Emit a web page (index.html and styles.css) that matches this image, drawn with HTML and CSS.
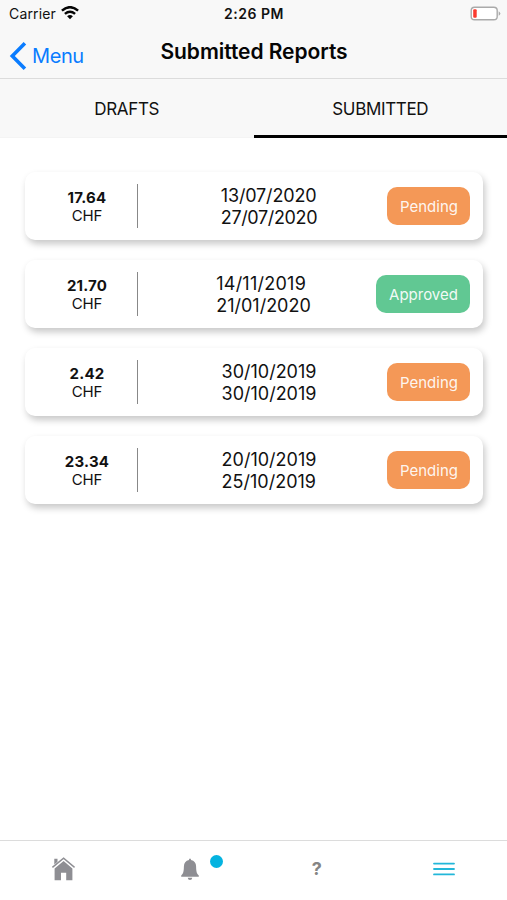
FILE: index.html
```html
<!DOCTYPE html>
<html lang="en">
<head>
<meta charset="utf-8">
<title>Submitted Reports</title>
<link rel="stylesheet" href="styles.css">
</head>
<body>
<header class="top">
  <div class="status">
    <div class="carrier"><span>Carrier</span>
      <svg width="18" height="14" viewBox="0 0 18 14" fill="none" stroke="#050505" stroke-width="2.5"><path d="M.9 4.6Q9-2.2 17.1 4.6M3.9 7.9Q9 3.7 14.1 7.9"/><path d="M6.1 10.2Q9 7.8 11.9 10.2L9 13.2Z" fill="#050505" stroke="none"/></svg>
    </div>
    <time class="clock">2:26 PM</time>
    <svg class="battery" width="31" height="16" viewBox="0 0 31 16"><rect x="1.2" y="1.2" width="26" height="12.6" rx="3.4" fill="#fff" stroke="#aaa" stroke-width="1.4"/><rect x="3.2" y="3.3" width="3.5" height="8.5" rx="1" fill="#fb3b30"/><path d="M28.7 5.2Q32 7.5 28.7 9.8Z" fill="#aaa"/></svg>
  </div>
  <div class="nav">
    <a class="back"><svg width="18" height="28" viewBox="0 0 18 28" fill="none" stroke="#0a7cff" stroke-width="3.6"><path d="M15.9 1.3 3.3 14 15.9 26.7"/></svg><span>Menu</span></a>
    <h1>Submitted Reports</h1>
  </div>
</header>
<nav class="tabs"><a class="tab">DRAFTS</a><a class="tab active">SUBMITTED</a></nav>
<main class="list">
  <article class="card"><div class="amount"><b>17.64</b><span>CHF</span></div><div class="dates tight"><div><p>13/07/2020</p><p>27/07/2020</p></div></div><span class="badge pending">Pending</span></article>
  <article class="card"><div class="amount"><b>21.70</b><span>CHF</span></div><div class="dates"><div><p class="loose">14/11/2019</p><p>21/01/2020</p></div></div><span class="badge approved">Approved</span></article>
  <article class="card"><div class="amount"><b>2.42</b><span>CHF</span></div><div class="dates"><div><p>30/10/2019</p><p>30/10/2019</p></div></div><span class="badge pending">Pending</span></article>
  <article class="card"><div class="amount"><b>23.34</b><span>CHF</span></div><div class="dates"><div><p>20/10/2019</p><p>25/10/2019</p></div></div><span class="badge pending">Pending</span></article>
</main>
<footer class="bottom">
  <a class="item"><svg width="24" height="24" viewBox="0 0 24 24"><path d="M3.3 1.8h3.2v3L3.3 7.6zM3.6 11.5 12.6 4 21.4 11.5V23.3h-6.2v-7.6H10v7.6H3.6z" fill="#8e8e93"/><path d="M1.4 10.3 12.6 1.1 23.6 10.3" fill="none" stroke="#8e8e93" stroke-width="1.5"/></svg></a>
  <a class="item"><span class="bell"><svg width="18" height="23" viewBox="0 0 18 23" fill="#8e8e93"><path d="M8 2V1.4Q9-.2 10 1.4V2Q15 3 15.1 8.5C15.2 13.5 15.7 15.7 17.8 17.6V18.7H.2V17.6C2.3 15.7 2.8 13.5 2.9 8.5Q3 3 8 2ZM6.7 19.7h4.6Q11 21.9 9 21.9T6.7 19.7Z"/></svg><i class="dot"></i></span></a>
  <a class="item help">?</a>
  <a class="item menu"><svg width="22" height="14" viewBox="0 0 22 14" stroke="#23b7d9" stroke-width="1.8" stroke-linecap="round"><path d="M1 1.6h20M1 7h20M1 12.4h20"/></svg></a>
</footer>
</body>
</html>
```
FILE: styles.css
```css
* { box-sizing: border-box; }
body { margin: 0; height: 900px; display: flex; flex-direction: column; background: #fff; color: #111; font-family: Inter, "Liberation Sans", sans-serif; overflow: hidden; }
p, h1 { margin: 0; }
svg { display: block; flex: none; }
.top { height: 79px; background: #f8f8f8; border-bottom: 1px solid #dcdcdc; }
.status { height: 27px; display: grid; grid-template-columns: 1fr auto 1fr; align-items: center; padding: 0 6px 0 9px; font-size: 14px; }
.carrier { display: flex; align-items: center; gap: 6px; letter-spacing: .15px; }
.carrier svg { margin: -2px 0 0 -1px; }
.clock { margin-right: 2px; font-weight: 600; font-size: 14px; letter-spacing: .5px; }
.battery { justify-self: end; }
.nav { height: 51px; display: grid; grid-template-columns: 1fr auto 1fr; padding: 0 9px; }
.back { display: flex; align-items: center; gap: 5px; height: 58px; color: #0a7cff; font-size: 20px; letter-spacing: -.4px; }
h1 { font-size: 21px; line-height: 50px; font-weight: 600; letter-spacing: -.05px; color: #050505; margin-right: -1px; }
.tabs { height: 59px; display: flex; background: #f8f8f8; border-bottom: 1px solid #f4f4f4; }
.tab { flex: 1; height: 59px; text-align: center; font-size: 17px; line-height: 60px; letter-spacing: -.35px; }
.active { border-bottom: 3px solid #000; }
.list { flex: 1; padding: 34px 24px 0 25px; display: flex; flex-direction: column; gap: 20px; }
.card { height: 68px; display: flex; align-items: center; padding-right: 13px; border-radius: 10px; background: #fff; box-shadow: 2px 4px 7px rgba(0,0,0,.22); }
.amount { width: 113px; height: 44px; padding: 5px 0 0 12px; display: flex; flex-direction: column; align-items: center; border-right: 1px solid #888; font-size: 15px; line-height: 18px; }
.amount b { letter-spacing: .2px; }
.amount span { letter-spacing: -.1px; }
.dates { flex: 1; display: flex; justify-content: center; padding: 2px 0 0 13px; font-size: 18px; line-height: 22px; }
.tight { letter-spacing: -.35px; }
.tight p:first-child { letter-spacing: -.15px; }
.loose { letter-spacing: .25px; }
.badge { height: 38px; border-radius: 10px; color: rgba(255,255,255,.93); font-size: 15px; line-height: 39px; text-align: center; padding-left: 1px; }
.pending { width: 83px; background: #f49857; }
.approved { width: 94px; background: #61c893; }
.bottom { height: 60px; display: flex; border-top: 1px solid #dcdcdc; }
.item { flex: 1; display: flex; justify-content: center; align-items: center; height: 56px; }
.bell { position: relative; }
.dot { position: absolute; left: 29px; top: -3px; width: 13px; height: 13px; border-radius: 50%; background: #05b3e0; }
.help { height: 54px; color: #858585; font-size: 18px; font-weight: 700; }
```
